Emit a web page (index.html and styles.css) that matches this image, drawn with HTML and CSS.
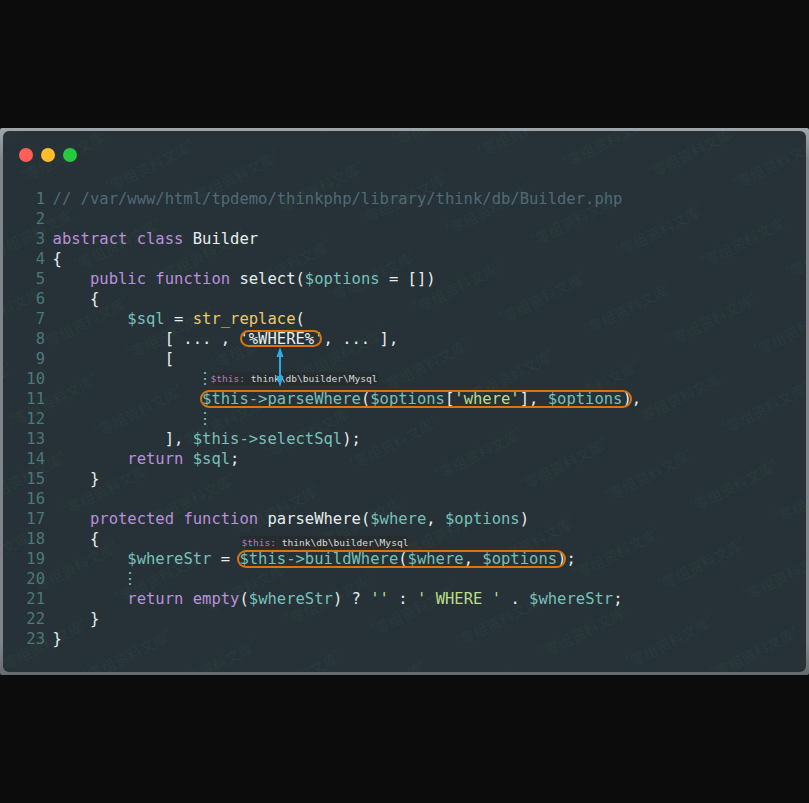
FILE: index.html
```html
<!DOCTYPE html>
<html lang="zh">
<head>
<meta charset="utf-8">
<title>Builder.php</title>
<link rel="stylesheet" href="styles.css">
</head>
<body>
<main class="frame">
<div class="window">
  <svg class="watermarks" aria-hidden="true">
    <defs>
      <text id="mark" class="mark" transform="rotate(-27)">'零组资料文库'</text>
      <g id="row">
        <use href="#mark" transform="translate(-170 -21.4)"/>
        <use href="#mark" transform="translate(-85 -10.7)"/>
        <use href="#mark"/>
        <use href="#mark" transform="translate(85 10.7)"/>
        <use href="#mark" transform="translate(170 21.4)"/>
        <use href="#mark" transform="translate(255 32.1)"/>
        <use href="#mark" transform="translate(340 42.8)"/>
        <use href="#mark" transform="translate(425 53.5)"/>
        <use href="#mark" transform="translate(510 64.2)"/>
        <use href="#mark" transform="translate(595 74.9)"/>
        <use href="#mark" transform="translate(680 85.6)"/>
        <use href="#mark" transform="translate(765 96.3)"/>
        <use href="#mark" transform="translate(850 107)"/>
        <use href="#mark" transform="translate(935 117.7)"/>
      </g>
    </defs>
    <g transform="translate(139 -16)">
      <use href="#row" transform="translate(64 -156)"/>
      <use href="#row" transform="translate(32 -78)"/>
      <use href="#row"/>
      <use href="#row" transform="translate(-32 78)"/>
      <use href="#row" transform="translate(-64 156)"/>
      <use href="#row" transform="translate(-96 234)"/>
      <use href="#row" transform="translate(-128 312)"/>
      <use href="#row" transform="translate(-160 390)"/>
      <use href="#row" transform="translate(-192 468)"/>
      <use href="#row" transform="translate(-224 546)"/>
    </g>
  </svg>
  <header class="titlebar">
    <span class="dot red"></span><span class="dot yellow"></span><span class="dot green"></span>
  </header>
  <div class="code">
    <div class="line"><span class="n">1</span><span class="c">// /var/www/html/tpdemo/thinkphp/library/think/db/Builder.php</span></div>
    <div class="line"><span class="n">2</span></div>
    <div class="line"><span class="n">3</span><span><span class="k">abstract class</span> Builder</span></div>
    <div class="line"><span class="n">4</span><span>{</span></div>
    <div class="line"><span class="n">5</span><span>    <span class="k">public function</span> select(<span class="v">$options</span> = [])</span></div>
    <div class="line"><span class="n">6</span><span>    {</span></div>
    <div class="line"><span class="n">7</span><span>        <span class="v">$sql</span> = <span class="y">str_replace</span>(</span></div>
    <div class="line"><span class="n">8</span><span>            [ ... , <span class="hl where">'%WHERE%'<svg class="arrow" width="10" height="42" viewBox="0 0 10 42"><path class="arrow-shaft" d="M5 8V34"/><path class="arrow-head" d="M5 0L8.5 10H1.5Z"/><path class="arrow-head" d="M5 40L8.5 29H1.5Z"/></svg></span>, ... ],</span></div>
    <div class="line"><span class="n">9</span><span>            [</span></div>
    <div class="line"><span class="n">10</span><span>                <span class="dots">⋮</span><span class="hint hint-inline"><span class="hint-k">$this:</span> think\db\builder\Mysql</span></span></div>
    <div class="line"><span class="n">11</span><span>                <span class="hl"><span class="v">$this-&gt;parseWhere</span>(<span class="v">$options</span>[<span class="s">'where'</span>], <span class="v">$options</span>)</span>,</span></div>
    <div class="line"><span class="n">12</span><span>                <span class="dots">⋮</span></span></div>
    <div class="line"><span class="n">13</span><span>            ], <span class="v">$this-&gt;selectSql</span>);</span></div>
    <div class="line"><span class="n">14</span><span>        <span class="k">return</span> <span class="v">$sql</span>;</span></div>
    <div class="line"><span class="n">15</span><span>    }</span></div>
    <div class="line"><span class="n">16</span></div>
    <div class="line"><span class="n">17</span><span>    <span class="k">protected function</span> parseWhere(<span class="v">$where</span>, <span class="v">$options</span>)</span></div>
    <div class="line"><span class="n">18</span><span>    {</span></div>
    <div class="line"><span class="n">19</span><span>        <span class="v">$whereStr</span> = <span class="hl"><span class="hint hint-over"><span class="hint-k">$this:</span> think\db\builder\Mysql</span><span class="v">$this-&gt;buildWhere</span>(<span class="v">$where</span>, <span class="v">$options</span>)</span>;</span></div>
    <div class="line"><span class="n">20</span><span>        <span class="dots">⋮</span></span></div>
    <div class="line"><span class="n">21</span><span>        <span class="k">return</span> <span class="k">empty</span>(<span class="v">$whereStr</span>) ? <span class="s">''</span> : <span class="s">' WHERE '</span> . <span class="v">$whereStr</span>;</span></div>
    <div class="line"><span class="n">22</span><span>    }</span></div>
    <div class="line"><span class="n">23</span><span>}</span></div>
  </div>
</div>
</main>
</body>
</html>
```

FILE: styles.css
```css
* { box-sizing: border-box; }

html, body { height: 100%; }

body {
  margin: 0;
  display: flex;
  align-items: center;
  background: #0c0c0d;
  font-family: "DejaVu Sans Mono", monospace;
}

.frame {
  width: 100%;
  height: 547px;
  padding: 3px;
  background: linear-gradient(#a0a7aa, #7f8588 6%, #7f8588 94%, #666b6e);
  border-radius: 2px;
}

.window {
  position: relative;
  height: 100%;
  overflow: hidden;
  background: #263238;
  border-radius: 6px;
}

.watermarks {
  position: absolute;
  inset: 0;
  width: 100%;
  height: 100%;
}

.mark {
  font-family: "Noto Sans CJK SC", sans-serif;
  font-size: 14.5px;
  fill: #2a3b3a;
}

.titlebar {
  position: relative;
  display: flex;
  gap: 8px;
  height: 48px;
  padding: 17px 0 0 16px;
}

.dot {
  width: 14px;
  height: 14px;
  border-radius: 50%;
}
.red { background: #ff5f56; }
.yellow { background: #ffbd2e; }
.green { background: #27c93f; }

.code {
  position: relative;
  padding: 10px 0 23px;
  font-size: 15.52px;
  line-height: 20px;
  color: #e6eeee;
}

.line {
  display: flex;
  gap: 7.6px;
  height: 20px;
  white-space: pre;
}

.n {
  flex: none;
  width: 42px;
  text-align: right;
  color: #4c7878;
}

.c { color: #526a75; }
.k { color: #bb8fdc; }
.v { color: #76c0b9; }
.s { color: #bbdc88; }
.y { color: #eec968; }

.dots {
  display: inline-block;
  margin: 0 -2px 0 -5.5px;
  color: #76c0b9;
}

.hint {
  font-size: 9.57px;
  line-height: 13px;
  color: #d5dcdc;
  background: rgba(40, 40, 40, 0.55);
}
.hint-k { color: #ad80bd; }

.hint-inline {
  display: inline-block;
  vertical-align: 2px;
}

.hint-over {
  position: absolute;
  left: 2px;
  top: -14px;
}

.hl { position: relative; }
.hl::after {
  content: "";
  position: absolute;
  inset: 0 0 0 -2px;
  border: 2px solid #d9740f;
  border-radius: 9px;
}
.where::after { inset: 0 2px 1px 1px; }

.arrow {
  position: absolute;
  left: 35.5px;
  top: 17px;
  overflow: visible;
}
.arrow-shaft { stroke: #2fa9e6; stroke-width: 2; fill: none; }
.arrow-head { fill: #2fa9e6; }
```
